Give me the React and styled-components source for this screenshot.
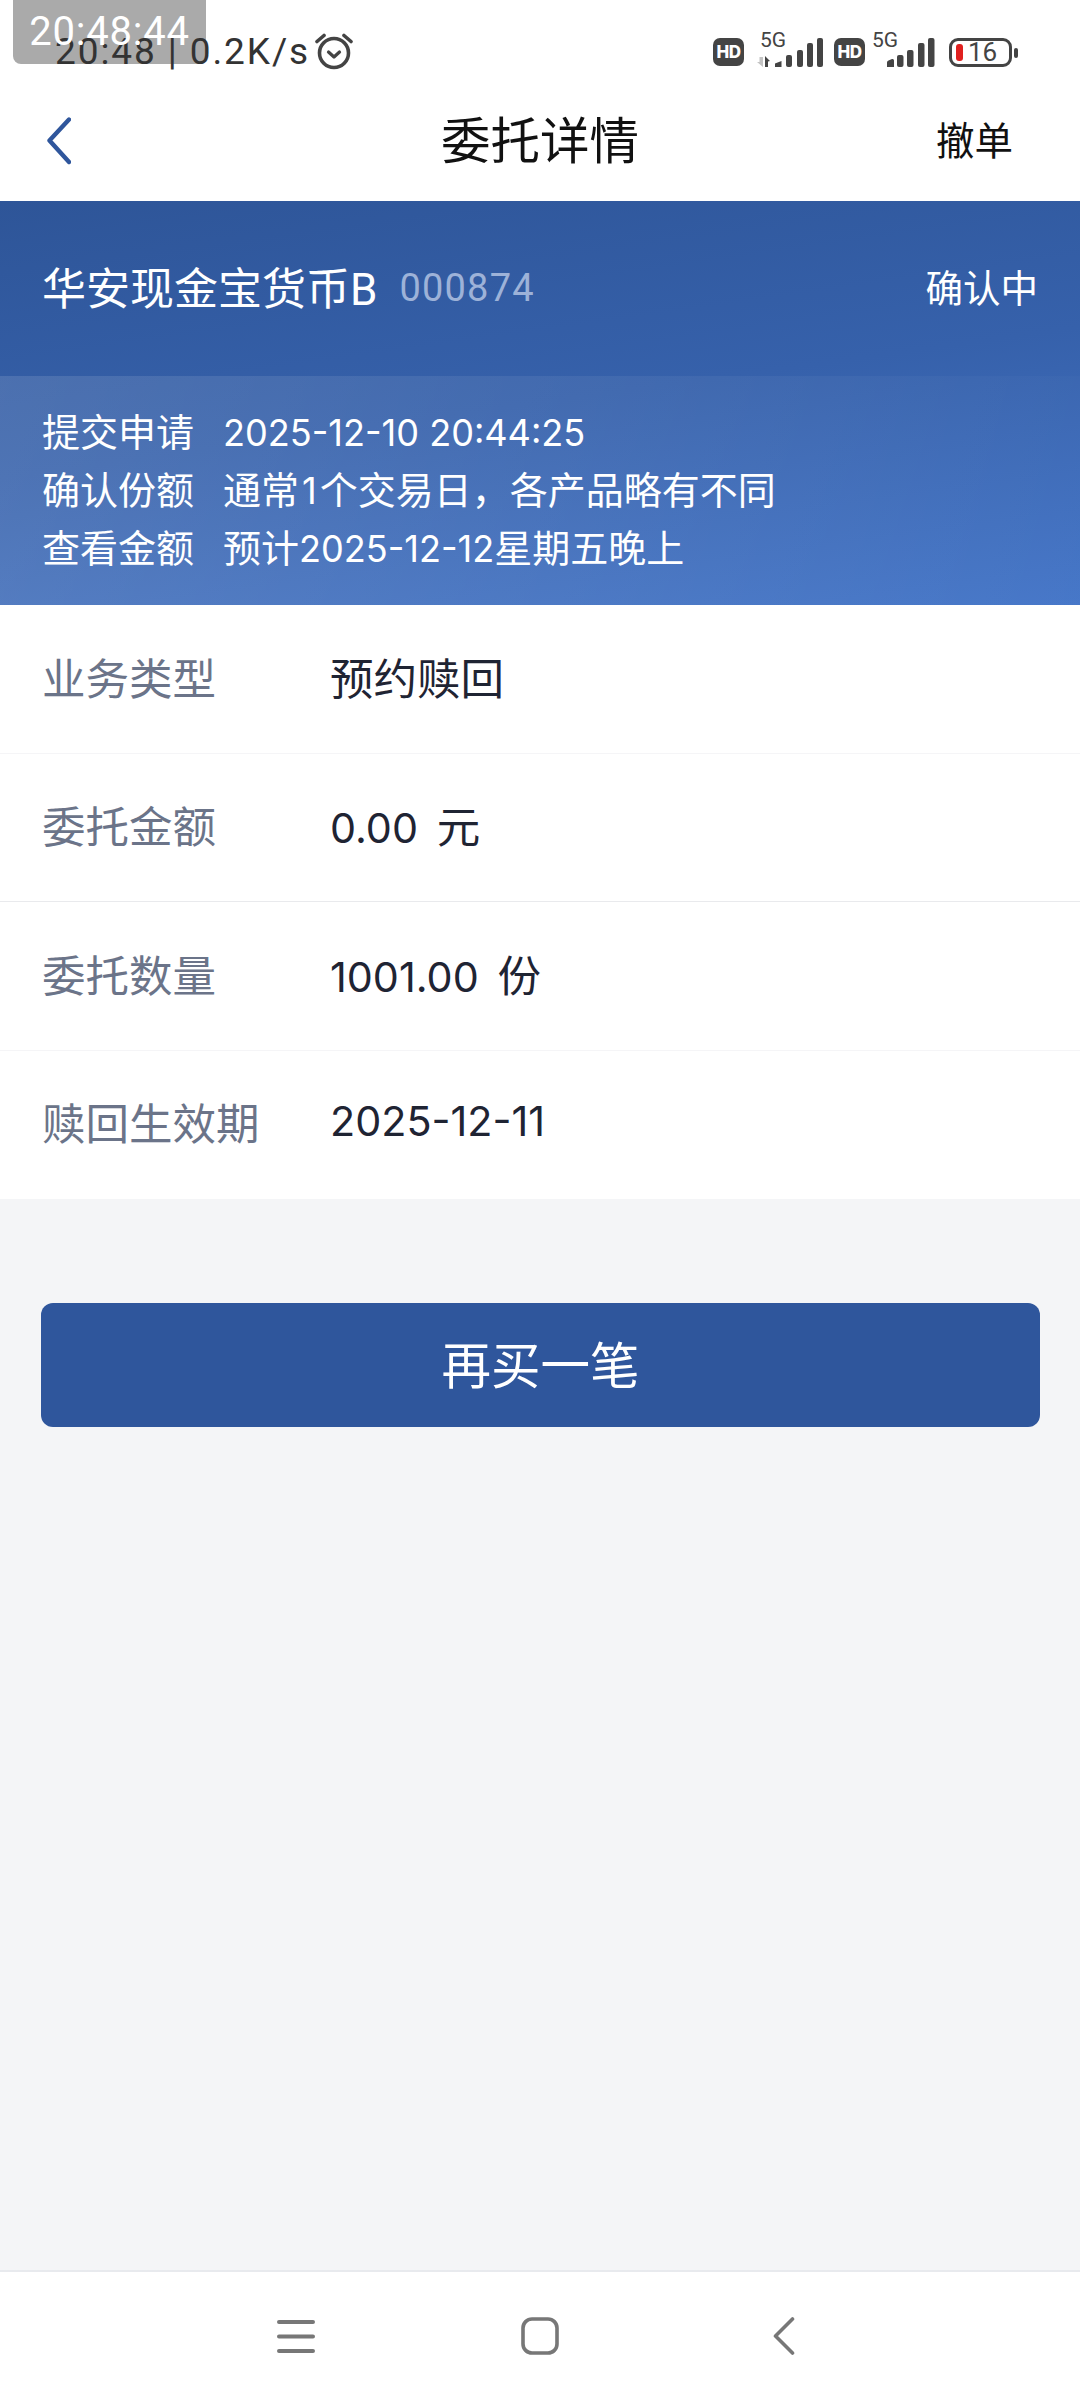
import styled, { createGlobalStyle } from "styled-components";

const GlobalStyle = createGlobalStyle`
  html, body {
    margin: 0;
    padding: 0;
    background: #f4f5f7;
  }
  * {
    box-sizing: border-box;
  }
`;

const Page = styled.div`
  position: relative;
  width: 1080px;
  height: 2400px;
  display: flex;
  flex-direction: column;
  overflow: hidden;
  background: #f4f5f7;
  font-family: Roboto, "Noto Sans CJK SC", sans-serif;
`;

const StatusBar = styled.div`
  height: 80px;
  padding: 24px 68px 0 55px;
  background: #fff;
  display: flex;
  justify-content: space-between;
  align-items: flex-start;
`;
const StatusLeft = styled.div`
  position: relative;
  z-index: 2;
  display: flex;
  align-items: center;
  gap: 5px;
  height: 54px;
  font-size: 37px;
  letter-spacing: 1.9px;
  color: #333;
`;
const StatusRight = styled.div`
  display: flex;
  align-items: center;
  height: 54px;
  margin-top: 1px;
`;
const TimeChip = styled.div`
  position: absolute;
  left: 13px;
  top: 0;
  width: 193px;
  height: 64px;
  background: #aaaaaa;
  border-radius: 0 0 8px 8px;
`;
const TimeText = styled.div`
  position: relative;
  z-index: 3;
  color: #fff;
  font-size: 40px;
  line-height: 64px;
  text-align: center;
  letter-spacing: 0.8px;
`;
const HdBadge = styled.div`
  width: 31px;
  height: 28px;
  margin-left: ${(p) => p.$left || 0}px;
  border-radius: 7px;
  background: #444;
  color: #fff;
  font: 800 17px/28px Inter, sans-serif;
  text-align: center;
  letter-spacing: -0.5px;
`;
const SignalBox = styled.div`
  position: relative;
  width: ${(p) => p.$width}px;
  height: 36px;
  margin: -6px 0 0 ${(p) => p.$left}px;
  svg {
    position: absolute;
    right: 0;
    bottom: 0;
  }
`;
const FiveG = styled.span`
  position: absolute;
  left: ${(p) => p.$left}px;
  top: -3px;
  font-size: 21px;
  line-height: 24px;
  color: #444;
`;
const Battery = styled.div`
  position: relative;
  width: 63px;
  height: 29px;
  margin-left: 14px;
  border: 3px solid #444;
  border-radius: 9px;
  padding-left: 16px;
  font-size: 26px;
  line-height: 23px;
  color: #444;
  &::before {
    content: "";
    position: absolute;
    left: 4px;
    top: 3px;
    width: 7px;
    height: 17px;
    border-radius: 3px;
    background: #e0201f;
  }
  &::after {
    content: "";
    position: absolute;
    right: -9px;
    top: 7px;
    width: 4px;
    height: 10px;
    border-radius: 2px;
    background: #444;
  }
`;

const NavBar = styled.div`
  position: relative;
  height: 121px;
  padding: 0 67px 0 47px;
  background: #fff;
  display: flex;
  align-items: center;
  justify-content: space-between;
`;
const NavTitle = styled.div`
  position: absolute;
  left: 0;
  right: 0;
  padding-bottom: 6px;
  text-align: center;
  font-size: 49.5px;
  color: #111;
  pointer-events: none;
`;
const NavAction = styled.div`
  padding-bottom: 5px;
  font-size: 38.5px;
  color: #111;
`;

const Hero = styled.div`
  background: linear-gradient(172deg, #2e5598 0%, #3661ab 50%, #4576c8 100%);
  color: #fff;
`;
const HeroTop = styled.div`
  height: 175px;
  padding: 0 42px 6px 42px;
  display: flex;
  align-items: center;
  justify-content: space-between;
`;
const FundName = styled.div`
  display: flex;
  align-items: center;
  gap: 22px;
  font-size: 44px;
`;
const FundCode = styled.span`
  padding-top: 4px;
  font-size: 38px;
  letter-spacing: 1.2px;
  color: #9db2d8;
`;
const FundState = styled.div`
  font-size: 37.5px;
`;
const HeroDetail = styled.div`
  padding: 28px 42px 27px;
  background: linear-gradient(100deg, rgba(255, 255, 255, 0.12), rgba(255, 255, 255, 0.01) 100%);
`;
const DetailLine = styled.div`
  display: flex;
  height: 58px;
  line-height: 58px;
  font-size: 38px;
`;
const DetailLabel = styled.span`
  width: 181px;
  flex: none;
`;
const Num = styled.span`
  font-family: Inter, sans-serif;
  font-size: 0.95em;
  padding: 0 ${(p) => p.$pad || 0}px;
`;

const InfoList = styled.div`
  background: #fff;
`;
const InfoRow = styled.div`
  height: 148.5px;
  padding: 0 0 5px 42px;
  display: flex;
  align-items: center;
  font-size: 43.5px;
  border-bottom: 1px solid ${(p) => (p.$last ? "#fff" : p.$strong ? "#e9eaed" : "#f5f5f7")};
`;
const InfoLabel = styled.span`
  width: 288px;
  flex: none;
  color: #6b7489;
`;
const InfoValue = styled.span`
  color: #1f2433;
  word-spacing: 8px;
`;

const ButtonWrap = styled.div`
  padding: 104px 40px 0 41px;
  flex: 1;
`;
const BuyButton = styled.div`
  height: 124px;
  padding-bottom: 6px;
  border-radius: 12px;
  background: #2f569c;
  color: #fff;
  font-size: 49.5px;
  display: flex;
  align-items: center;
  justify-content: center;
`;

const BottomNav = styled.div`
  height: 130px;
  background: #fff;
  border-top: 2px solid #e8eaee;
  display: grid;
  grid-template-columns: repeat(3, 1fr);
  padding: 0 174px;
  align-items: center;
  justify-items: center;
`;

function AlarmIcon() {
  return (
    <svg width="38" height="38" viewBox="0 0 38 38" fill="none" stroke="#444" strokeLinecap="round" strokeLinejoin="round">
      <circle cx="19" cy="21" r="14.5" strokeWidth="3.6" />
      <path d="M13.5 20l5.5 5 5.5-5" strokeWidth="3.2" />
      <path d="M2 9.5L9 3.5M36 9.5L29 3.5" strokeWidth="3.6" />
    </svg>
  );
}

function SignalBars() {
  return (
    <svg width="48" height="29" viewBox="0 0 48 29" fill="#444">
      <path d="M0 24.5Q0 23 1.5 22.5L5 21Q7 20.5 7 22.5V29H0z" />
      <rect x="10" y="17" width="6.5" height="12" rx="2" />
      <rect x="20" y="12" width="6.5" height="17" rx="2" />
      <rect x="31" y="5" width="6.5" height="24" rx="2" />
      <rect x="41" y="0" width="6.5" height="29" rx="2" />
    </svg>
  );
}

function DataSignal() {
  return (
    <svg width="67" height="29" viewBox="0 0 67 29" fill="#444">
      <path d="M1 24h2.5v-5H7v10z" fill="#c4c4c4" />
      <path d="M9 18l5 5-2 .5V29H9z" />
      <path d="M19 25.5l6.5-2.5V29H19z" />
      <rect x="30" y="17" width="6" height="12" rx="2" />
      <rect x="41" y="12" width="6" height="17" rx="2" />
      <rect x="51" y="5" width="6" height="24" rx="2" />
      <rect x="61" y="0" width="6" height="29" rx="2" />
    </svg>
  );
}

function BackIcon() {
  return (
    <svg width="24" height="48" viewBox="0 0 24 48" fill="none" stroke="#2f569c" strokeWidth="4.4" strokeLinecap="round" strokeLinejoin="round">
      <path d="M22 2.5L2.5 23.5 22 45" />
    </svg>
  );
}

function MenuIcon() {
  return (
    <svg width="38" height="33" viewBox="0 0 38 33" fill="none" stroke="#777" strokeWidth="4" strokeLinecap="round">
      <path d="M2 2h34M2 16.5h34M2 31h34" />
    </svg>
  );
}

function HomeIcon() {
  return (
    <svg width="38" height="38" viewBox="0 0 38 38" fill="none" stroke="#777" strokeWidth="3.6">
      <rect x="2" y="2" width="34" height="34" rx="9" />
    </svg>
  );
}

function BackNavIcon() {
  return (
    <svg width="22" height="38" viewBox="0 0 22 38" fill="none" stroke="#777" strokeWidth="3.6" strokeLinecap="round" strokeLinejoin="round">
      <path d="M19.5 2L2.5 19l17 17" />
    </svg>
  );
}

const details = [
  ["提交申请", <Num key="a">2025-12-10 20:44:25</Num>],
  ["确认份额", <>通常<Num $pad={3}>1</Num>个交易日，各产品略有不同</>],
  ["查看金额", <>预计<Num>2025-12-12</Num>星期五晚上</>],
];

const rows = [
  ["业务类型", "预约赎回"],
  ["委托金额", <><Num>0.00</Num> 元</>],
  ["委托数量", <><Num>1001.00</Num> 份</>],
  ["赎回生效期", <Num key="d">2025-12-11</Num>],
];

export default function App() {
  return (
    <Page>
      <GlobalStyle />
      <StatusBar>
        <StatusLeft>
          <span>20:48 | 0.2K/s</span>
          <AlarmIcon />
        </StatusLeft>
        <StatusRight>
          <HdBadge>HD</HdBadge>
          <SignalBox $width={67} $left={12}>
            <FiveG $left={4}>5G</FiveG>
            <DataSignal />
          </SignalBox>
          <HdBadge $left={11}>HD</HdBadge>
          <SignalBox $width={63} $left={7}>
            <FiveG $left={0}>5G</FiveG>
            <SignalBars />
          </SignalBox>
          <Battery>16</Battery>
        </StatusRight>
      </StatusBar>
      <TimeChip>
        <TimeText>20:48:44</TimeText>
      </TimeChip>
      <NavBar>
        <BackIcon />
        <NavTitle>委托详情</NavTitle>
        <NavAction>撤单</NavAction>
      </NavBar>
      <Hero>
        <HeroTop>
          <FundName>
            <span>华安现金宝货币B</span>
            <FundCode>000874</FundCode>
          </FundName>
          <FundState>确认中</FundState>
        </HeroTop>
        <HeroDetail>
          {details.map(([label, value]) => (
            <DetailLine key={label}>
              <DetailLabel>{label}</DetailLabel>
              <span>{value}</span>
            </DetailLine>
          ))}
        </HeroDetail>
      </Hero>
      <InfoList>
        {rows.map(([label, value], i) => (
          <InfoRow key={label} $strong={i === 1} $last={i === 3}>
            <InfoLabel>{label}</InfoLabel>
            <InfoValue>{value}</InfoValue>
          </InfoRow>
        ))}
      </InfoList>
      <ButtonWrap>
        <BuyButton>再买一笔</BuyButton>
      </ButtonWrap>
      <BottomNav>
        <MenuIcon />
        <HomeIcon />
        <BackNavIcon />
      </BottomNav>
    </Page>
  );
}
